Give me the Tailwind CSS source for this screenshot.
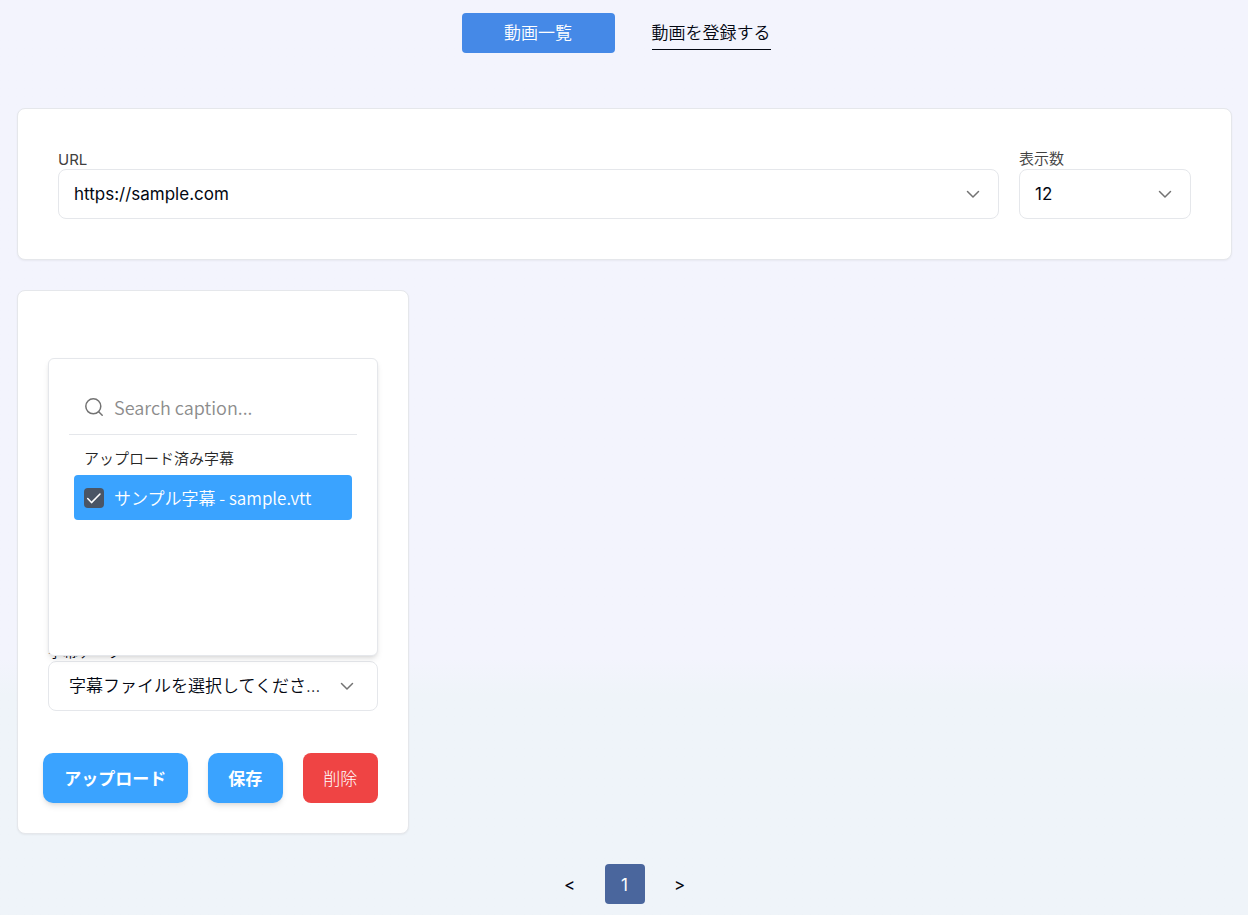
<!DOCTYPE html>
<html lang="ja">
<head>
<meta charset="utf-8">
<meta name="viewport" content="width=device-width, initial-scale=1">
<title>動画一覧</title>
<script src="https://cdn.jsdelivr.net/npm/@tailwindcss/browser@4"></script>
</head>
<body class="min-h-screen bg-linear-to-b from-[#f3f4fd] from-72% to-[#eff4f9] to-76% pt-[13px] pr-4 pb-[11px] pl-[17px] font-['Inter','Noto_Sans_CJK_JP',sans-serif] text-[17px] leading-6 text-gray-950">
  <nav class="flex items-center justify-center gap-5">
    <a href="#list" class="flex h-10 w-[153px] items-center justify-center rounded bg-[#4589e7] font-[350] text-white">動画一覧</a>
    <a href="#register" class="flex h-10 w-[153px] items-center justify-center font-[350] whitespace-nowrap"><span class="mt-[3px] border-b border-gray-950 pt-px pb-1">動画を登録する</span></a>
  </nav>

  <main class="mt-[55px]">
    <form class="flex gap-5 rounded-lg border border-gray-200 bg-white p-10 shadow-xs">
      <div class="flex-1">
        <label for="url" class="block pt-px text-[15px] leading-[19px] text-neutral-700">URL</label>
        <div class="relative">
          <select id="url" class="h-[50px] w-full appearance-none rounded-lg border border-gray-200 bg-white pr-12 pl-[15px]">
            <option>https://sample.com</option>
          </select>
          <svg class="pointer-events-none absolute top-[15px] right-4 size-5 text-neutral-500" viewBox="0 0 20 20" fill="none" stroke="currentColor" stroke-width="1.5" stroke-linecap="round" stroke-linejoin="round"><path d="M4.500 7.500 10 13l5.500-5.500"/></svg>
        </div>
      </div>
      <div class="w-[172px]">
        <label for="count" class="block text-[15px] leading-5 font-[350] text-neutral-700">表示数</label>
        <div class="relative">
          <select id="count" class="h-[50px] w-full appearance-none rounded-lg border border-gray-200 bg-white pr-12 pl-[15px]">
            <option>12</option>
          </select>
          <svg class="pointer-events-none absolute top-[15px] right-4 size-5 text-neutral-500" viewBox="0 0 20 20" fill="none" stroke="currentColor" stroke-width="1.5" stroke-linecap="round" stroke-linejoin="round"><path d="M4.500 7.500 10 13l5.500-5.500"/></svg>
        </div>
      </div>
    </form>

    <section class="mt-[30px] grid grid-cols-3 gap-5 font-['Noto_Sans_CJK_JP',sans-serif]">
      <article class="rounded-lg border border-gray-200 bg-white px-[30px] pt-[350px] pb-[30px] shadow-xs">
        <div class="relative">
          <span id="caption-label" class="block text-[15px] leading-5 font-[350]">字幕データ</span>
          <button type="button" aria-haspopup="listbox" aria-expanded="true" aria-labelledby="caption-label" class="flex h-[50px] w-full items-center gap-2.5 rounded-lg border border-gray-200 bg-white px-5 text-left font-['Inter','Noto_Sans_CJK_JP',sans-serif]">
            <span class="min-w-0 flex-1 font-[350] whitespace-nowrap">字幕ファイルを選択してくださ...</span>
            <svg class="size-5 shrink-0 text-neutral-500" viewBox="0 0 20 20" fill="none" stroke="currentColor" stroke-width="1.5" stroke-linecap="round" stroke-linejoin="round"><path d="M4.500 7.500 10 13l5.500-5.500"/></svg>
          </button>

          <div class="absolute inset-x-0 bottom-[55px] h-[298px] rounded-md border border-gray-200 bg-white px-5 pt-[21px] shadow-md">
            <div class="flex h-[55px] items-center gap-2.5 border-b border-gray-200 px-[15px]">
              <svg class="size-5 shrink-0 text-neutral-500" viewBox="0 0 20 20" fill="none" stroke="currentColor" stroke-width="1.5" stroke-linecap="round"><circle cx="9.300" cy="9.300" r="7.500"/><path d="m14.700 14.700 3.500 3.500"/></svg>
              <input type="text" aria-label="字幕を検索" placeholder="Search caption..." class="w-full min-w-0 bg-transparent text-lg leading-6 font-[350] outline-none placeholder:text-[#8c8c8c]">
            </div>
            <p class="mt-[13px] px-[15px] text-[15px] leading-5 font-[350] text-neutral-800">アップロード済み字幕</p>
            <label class="mx-[5px] mt-[7px] flex h-[45px] items-center gap-2.5 rounded bg-[#3aa3ff] px-2.5 font-[350] whitespace-nowrap text-white">
              <span class="relative size-5 shrink-0">
                <input type="checkbox" checked class="block size-5 appearance-none rounded bg-gray-600">
                <svg class="pointer-events-none absolute inset-0 size-5" viewBox="0 0 20 20" fill="none" stroke="currentColor" stroke-width="1.500" stroke-linecap="round" stroke-linejoin="round"><path d="m3.700 10.600 3.800 4L16 6"/></svg>
              </span>
              サンプル字幕 - sample.vtt
            </label>
          </div>
        </div>

        <div class="mt-[42px] flex justify-end gap-5 whitespace-nowrap">
          <button type="button" class="h-[50px] w-[145px] shrink-0 rounded-[10px] bg-[#3aa3ff] font-bold text-white shadow-md">アップロード</button>
          <button type="button" class="h-[50px] w-[75px] shrink-0 rounded-[10px] bg-[#3aa3ff] font-bold text-white shadow-md">保存</button>
          <button type="button" class="h-[50px] w-[75px] shrink-0 rounded-lg bg-[#ef4444] font-light text-white">削除</button>
        </div>
      </article>
    </section>
  </main>

  <nav aria-label="ページ" class="mt-[30px] flex justify-center gap-[15px]">
    <button type="button" class="size-10 pt-0.5">&lt;</button>
    <button type="button" aria-current="page" class="size-10 rounded bg-[#4a669d] pt-0.5 text-white">1</button>
    <button type="button" class="size-10 pt-0.5">&gt;</button>
  </nav>
</body>
</html>
